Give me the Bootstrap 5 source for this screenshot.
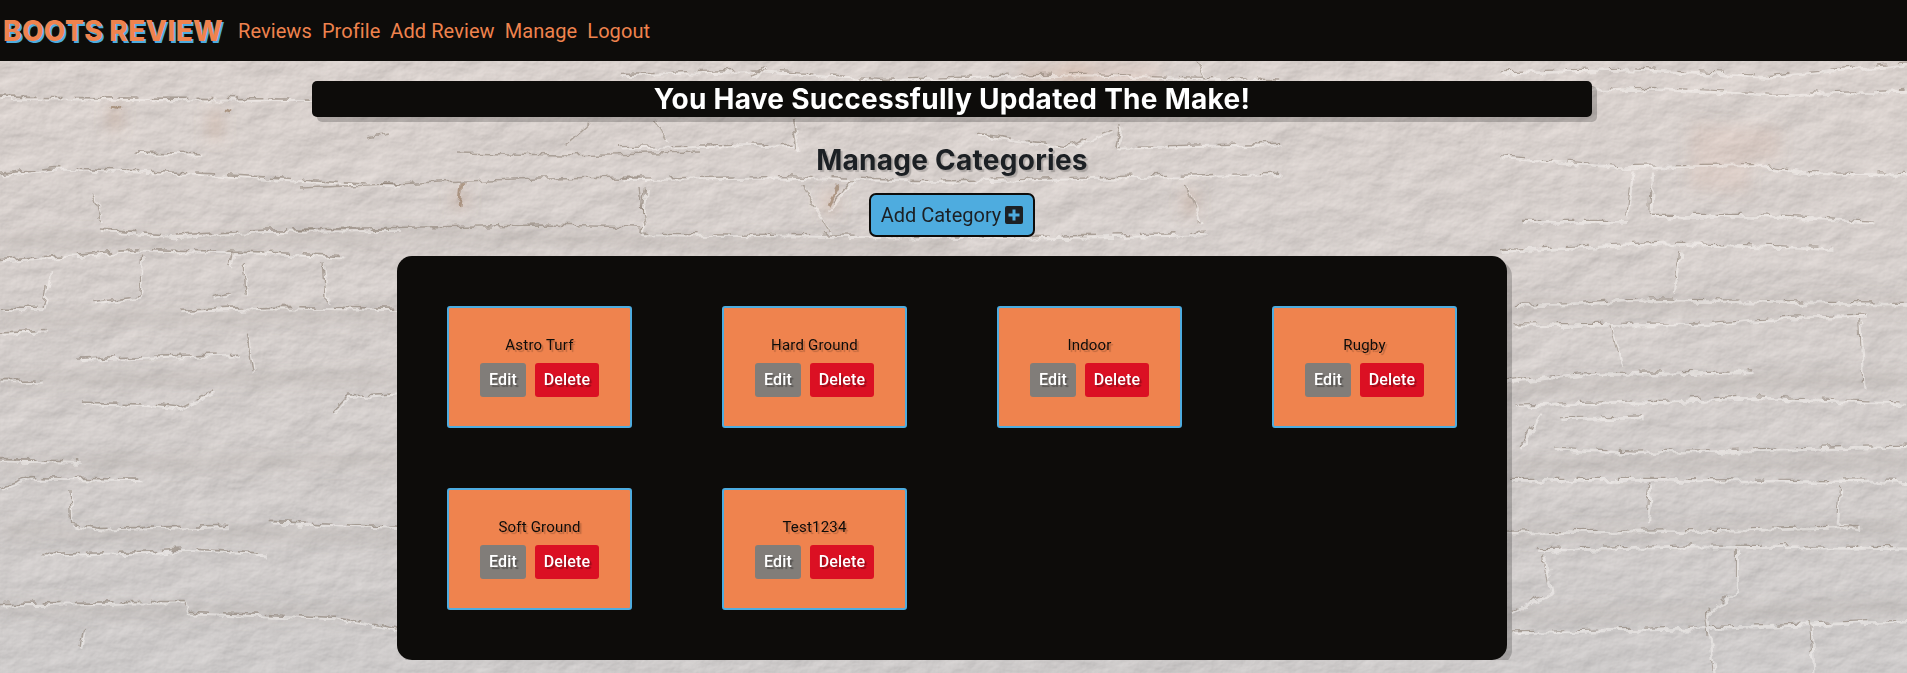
<!DOCTYPE html>
<html lang="en">
<head>
<meta charset="utf-8">
<meta name="viewport" content="width=device-width, initial-scale=1">
<title>Boots Review</title>
<link href="https://cdn.jsdelivr.net/npm/bootstrap@5.3.0/dist/css/bootstrap.min.css" rel="stylesheet">
<style>
  :root { --ink: #0d0c0a; --orange: #ef834e; --sky: #4eacdf; }
  body { font-family: Roboto, "Liberation Sans", sans-serif; color: #1c2024; background: #d8d4d2; overflow: hidden; }
  .wall { position: fixed; inset: 0; z-index: -1; width: 100%; height: 100%; }
  .site-nav { background: var(--ink); height: 61px; padding: 0 3px; }
  .site-nav .navbar-brand { font-family: Inter, Roboto, sans-serif; font-size: 28px; font-weight: 800; line-height: 40px; color: var(--orange); text-shadow: 2px 2px 0 var(--sky); letter-spacing: .3px; width: 223px; margin: 0 12px 0 0; padding: 0; white-space: nowrap; }
  .site-nav .navbar-nav { gap: 10px; }
  .site-nav .navbar-nav .nav-link { color: var(--orange); font-size: 20px; line-height: 30px; letter-spacing: .08px; padding: 1px 0 0; white-space: nowrap; }
  .notice { width: 1280px; height: 36px; margin-top: 20px; background: var(--ink); color: #fff; border-radius: 5px; box-shadow: 5px 5px 0 rgba(0,0,0,.2); }
  .notice h1, .page-title { font-family: Inter, Roboto, sans-serif; font-size: 28px; font-weight: 700; line-height: 36px; letter-spacing: .27px; margin: 0; }
  .page-title { margin-top: 25px; text-shadow: 2px 2px 1px rgba(0,0,0,.2); }
  .btn-add { margin-top: 15px; width: 166px; height: 44px; padding: 0; border: 2px solid var(--ink); border-radius: 7px; background: var(--sky); color: #1c2024; font-size: 20px; letter-spacing: 0; white-space: nowrap; }
  .panel { width: 1110px; margin-top: 19px; padding: 20px 5px; background: var(--ink); border-radius: 15px; box-shadow: 5px 5px 0 rgba(0,0,0,.2); }
  .tile { width: 185px; height: 122px; margin: 30px 45px; padding-top: 25px; background: var(--orange); border: 2px solid var(--sky); border-radius: 3px; }
  .tile p { font-size: 15px; line-height: 24px; letter-spacing: .2px; margin: 0 0 6px; color: var(--ink); text-shadow: 2px 2px 1px rgba(0,0,0,.2); }
  .tile-actions { gap: 9px; }
  .tile .btn { height: 34px; padding: 0; border: 0; border-radius: 3px; color: #fff; font-size: 16px; font-weight: 500; line-height: 34px; letter-spacing: .15px; text-shadow: 2px 2px 1px rgba(0,0,0,.3); }
  .tile .btn-edit { width: 46px; background: #817d79; }
  .tile .btn-del { width: 64px; background: #db1023; }
</style>
</head>
<body>
<svg class="wall" viewBox="0 0 1907 673" preserveAspectRatio="none" aria-hidden="true">
  <defs>
    <linearGradient id="shade" x1="0" y1="0" x2="0" y2="1"><stop offset="0" stop-color="#ecd8ce" stop-opacity=".2"/><stop offset="1" stop-color="#b6bac0" stop-opacity=".25"/></linearGradient>
    <filter id="plaster" x="0" y="0" width="100%" height="100%" color-interpolation-filters="sRGB">
      <feTurbulence type="fractalNoise" baseFrequency=".025 .035" numOctaves="6" seed="8"/>
      <feColorMatrix values="0 0 0 0 0  0 0 0 0 0  0 0 0 0 0  1 0 0 0 0"/>
      <feDiffuseLighting surfaceScale="1.3" diffuseConstant="1.03" lighting-color="#eee8e5"><feDistantLight azimuth="235" elevation="60"/></feDiffuseLighting>
    </filter>
    <filter id="rough" x="-5%" y="-5%" width="110%" height="110%">
      <feTurbulence type="fractalNoise" baseFrequency=".08" numOctaves="3" seed="3" result="n"/>
      <feDisplacementMap in="SourceGraphic" in2="n" scale="9" xChannelSelector="R" yChannelSelector="G"/><feGaussianBlur stdDeviation=".75"/>
    </filter>
    <filter id="soft"><feGaussianBlur stdDeviation="7"/></filter>
    <g id="lines-left">
      <path d="M0 95L930 100M410 235L600 240M0 290L170 275L620 290L1200 320M300 435L520 448L800 435L1200 432M0 510L420 485L760 490L1030 500M0 635L130 635L150 540M280 620L420 605L425 500M540 640L820 630L1200 635M0 695L140 692M235 765L716 750M0 820L130 818M240 875L440 880L540 890L640 845M760 800L740 700M640 605L690 595M1000 900L1040 860L1200 850M0 1022L235 1025M0 1095L90 1068L420 1072M210 1100L215 1185L300 1198L680 1190M810 1180L1200 1195M130 1265L400 1258L560 1250L800 1262M0 1390L400 1385L550 1385L560 1410L1000 1425L1200 1455M240 1500L250 1455M280 340L305 410M690 525L700 490M740 600L730 520M980 620L970 520"/>
    </g>
    <g id="lines-right">
      <path d="M0 30L400 20L800 40L1221 5M0 75L450 70L820 85L1221 75M0 245L360 270L760 265L900 285L1221 290M380 400L400 280M450 390L455 280M60 410L380 410M450 395L760 395L1120 412M0 485L500 465L1000 480M540 490L520 590M50 625L240 620L380 610L1221 620M40 675L620 672L870 655L1100 650M330 680L360 780M1080 660L1090 840M20 820L240 800L760 795M40 880L500 870L720 860L1221 875M180 915L430 910M60 990L120 900M160 990L400 1000L720 995L1221 985M30 1070L520 1070L1221 1075M450 1080L440 1180M1020 1090L1010 1180L1080 1195M20 1205L700 1200L1080 1190M110 1250L580 1240L1221 1245M130 1265L150 1360L30 1410M710 1250L710 1350L620 1415L640 1568M30 1460L600 1450L1221 1430M930 1440L940 1568"/>
    </g>
    <g id="lines-top">
      <path d="M0 40L320 30L620 55L1100 40L1568 60M340 20L310 50M1370 5L1390 60M0 260L410 250M410 180L420 270M850 220L1060 260L1170 210M80 180L110 240M1190 190L1180 260L1568 250M0 355L370 350L760 360L1568 340M430 370L500 520M550 360L490 450M1340 370L1380 490M60 380L50 520L490 525L980 530L1390 520"/>
    </g>
  </defs>
  <rect width="1907" height="673" filter="url(#plaster)"/>
  <rect width="1907" height="673" fill="url(#shade)"/>
  <g filter="url(#soft)" fill="none" stroke="#a39b94" stroke-opacity=".32" stroke-width="11">
    <path d="M0 240L400 236L960 246M0 320L400 314M0 380L400 378M0 465L400 460M0 530L400 536M0 607L400 615M1510 305L1907 304M1510 388L1907 378M1510 466L1907 462M1510 533L1907 528M1510 615L1907 608"/>
    <path stroke="#c79a7c" stroke-width="16" stroke-opacity=".24" d="M115 105V130M215 110V140M460 190V210M830 190V215M1190 190V215M1020 72L1090 75"/>
    <path stroke="#d9a78c" stroke-opacity=".14" stroke-width="34" d="M1690 140L1780 145M1690 172L1750 176M1060 75L1160 80"/>
  </g>
  <g filter="url(#rough)" fill="none">
    <g stroke="#fffdfb" stroke-opacity=".42" transform="translate(1.5 2)">
      <use href="#lines-left" transform="translate(0 60) scale(.333 .391)" style="stroke-width:5"/>
      <use href="#lines-right" transform="translate(1500 60) scale(.333 .391)" style="stroke-width:7"/>
      <use href="#lines-top" transform="translate(620 60) scale(.421 .333)" style="stroke-width:6"/>
    </g>
    <g stroke="#85786c" stroke-opacity=".55">
      <use href="#lines-left" transform="translate(0 60) scale(.333 .391)" style="stroke-width:4" stroke-dasharray="110 18 60 40"/>
      <use href="#lines-right" transform="translate(1500 60) scale(.333 .391)" style="stroke-width:3" stroke-dasharray="70 60 30 40"/>
      <use href="#lines-top" transform="translate(620 60) scale(.421 .333)" style="stroke-width:4" stroke-dasharray="80 40 40 30"/>
      <path stroke-width="1.5" d="M365 138L390 134M455 153L560 155L700 152M300 188L440 182L540 178L640 177M300 229L540 225L640 227M590 123L565 145M640 186L645 225"/>
      <path stroke="#8a6c50" stroke-width="3" d="M462 182L459 208M113 108L120 110M225 110L230 112M838 185L828 205"/>
    </g>
  </g>
</svg>

<nav class="navbar navbar-expand site-nav">
  <a class="navbar-brand" href="#">BOOTS REVIEW</a>
  <div class="navbar-nav">
    <a class="nav-link" href="#">Reviews</a>
    <a class="nav-link" href="#">Profile</a>
    <a class="nav-link" href="#">Add Review</a>
    <a class="nav-link" href="#">Manage</a>
    <a class="nav-link" href="#">Logout</a>
  </div>
</nav>

<main class="d-flex flex-column align-items-center text-center" style="padding-right:3px">
  <div class="notice"><h1>You Have Successfully Updated The Make!</h1></div>
  <h2 class="page-title">Manage Categories</h2>
  <a class="btn btn-add d-flex align-items-center justify-content-center gap-1" href="#"><span>Add Category</span>
    <svg width="18" height="18" viewBox="0 0 18 18" aria-hidden="true"><path fill="#1c2024" fill-rule="evenodd" d="M2 0H16Q18 0 18 2V16Q18 18 16 18H2Q0 18 0 16V2Q0 0 2 0ZM7.5 3.5V7.5H3.5V10.5H7.5V14.5H10.5V10.5H14.5V7.5H10.5V3.5Z"/></svg>
  </a>
  <section class="panel d-flex flex-wrap">
    <div class="tile"><p>Astro Turf</p><div class="tile-actions d-flex justify-content-center"><a class="btn btn-edit" href="#">Edit</a><a class="btn btn-del" href="#">Delete</a></div></div>
    <div class="tile"><p>Hard Ground</p><div class="tile-actions d-flex justify-content-center"><a class="btn btn-edit" href="#">Edit</a><a class="btn btn-del" href="#">Delete</a></div></div>
    <div class="tile"><p>Indoor</p><div class="tile-actions d-flex justify-content-center"><a class="btn btn-edit" href="#">Edit</a><a class="btn btn-del" href="#">Delete</a></div></div>
    <div class="tile"><p>Rugby</p><div class="tile-actions d-flex justify-content-center"><a class="btn btn-edit" href="#">Edit</a><a class="btn btn-del" href="#">Delete</a></div></div>
    <div class="tile"><p>Soft Ground</p><div class="tile-actions d-flex justify-content-center"><a class="btn btn-edit" href="#">Edit</a><a class="btn btn-del" href="#">Delete</a></div></div>
    <div class="tile"><p>Test1234</p><div class="tile-actions d-flex justify-content-center"><a class="btn btn-edit" href="#">Edit</a><a class="btn btn-del" href="#">Delete</a></div></div>
  </section>
</main>
<script src="https://cdn.jsdelivr.net/npm/bootstrap@5.3.0/dist/js/bootstrap.bundle.min.js"></script>
</body>
</html>
